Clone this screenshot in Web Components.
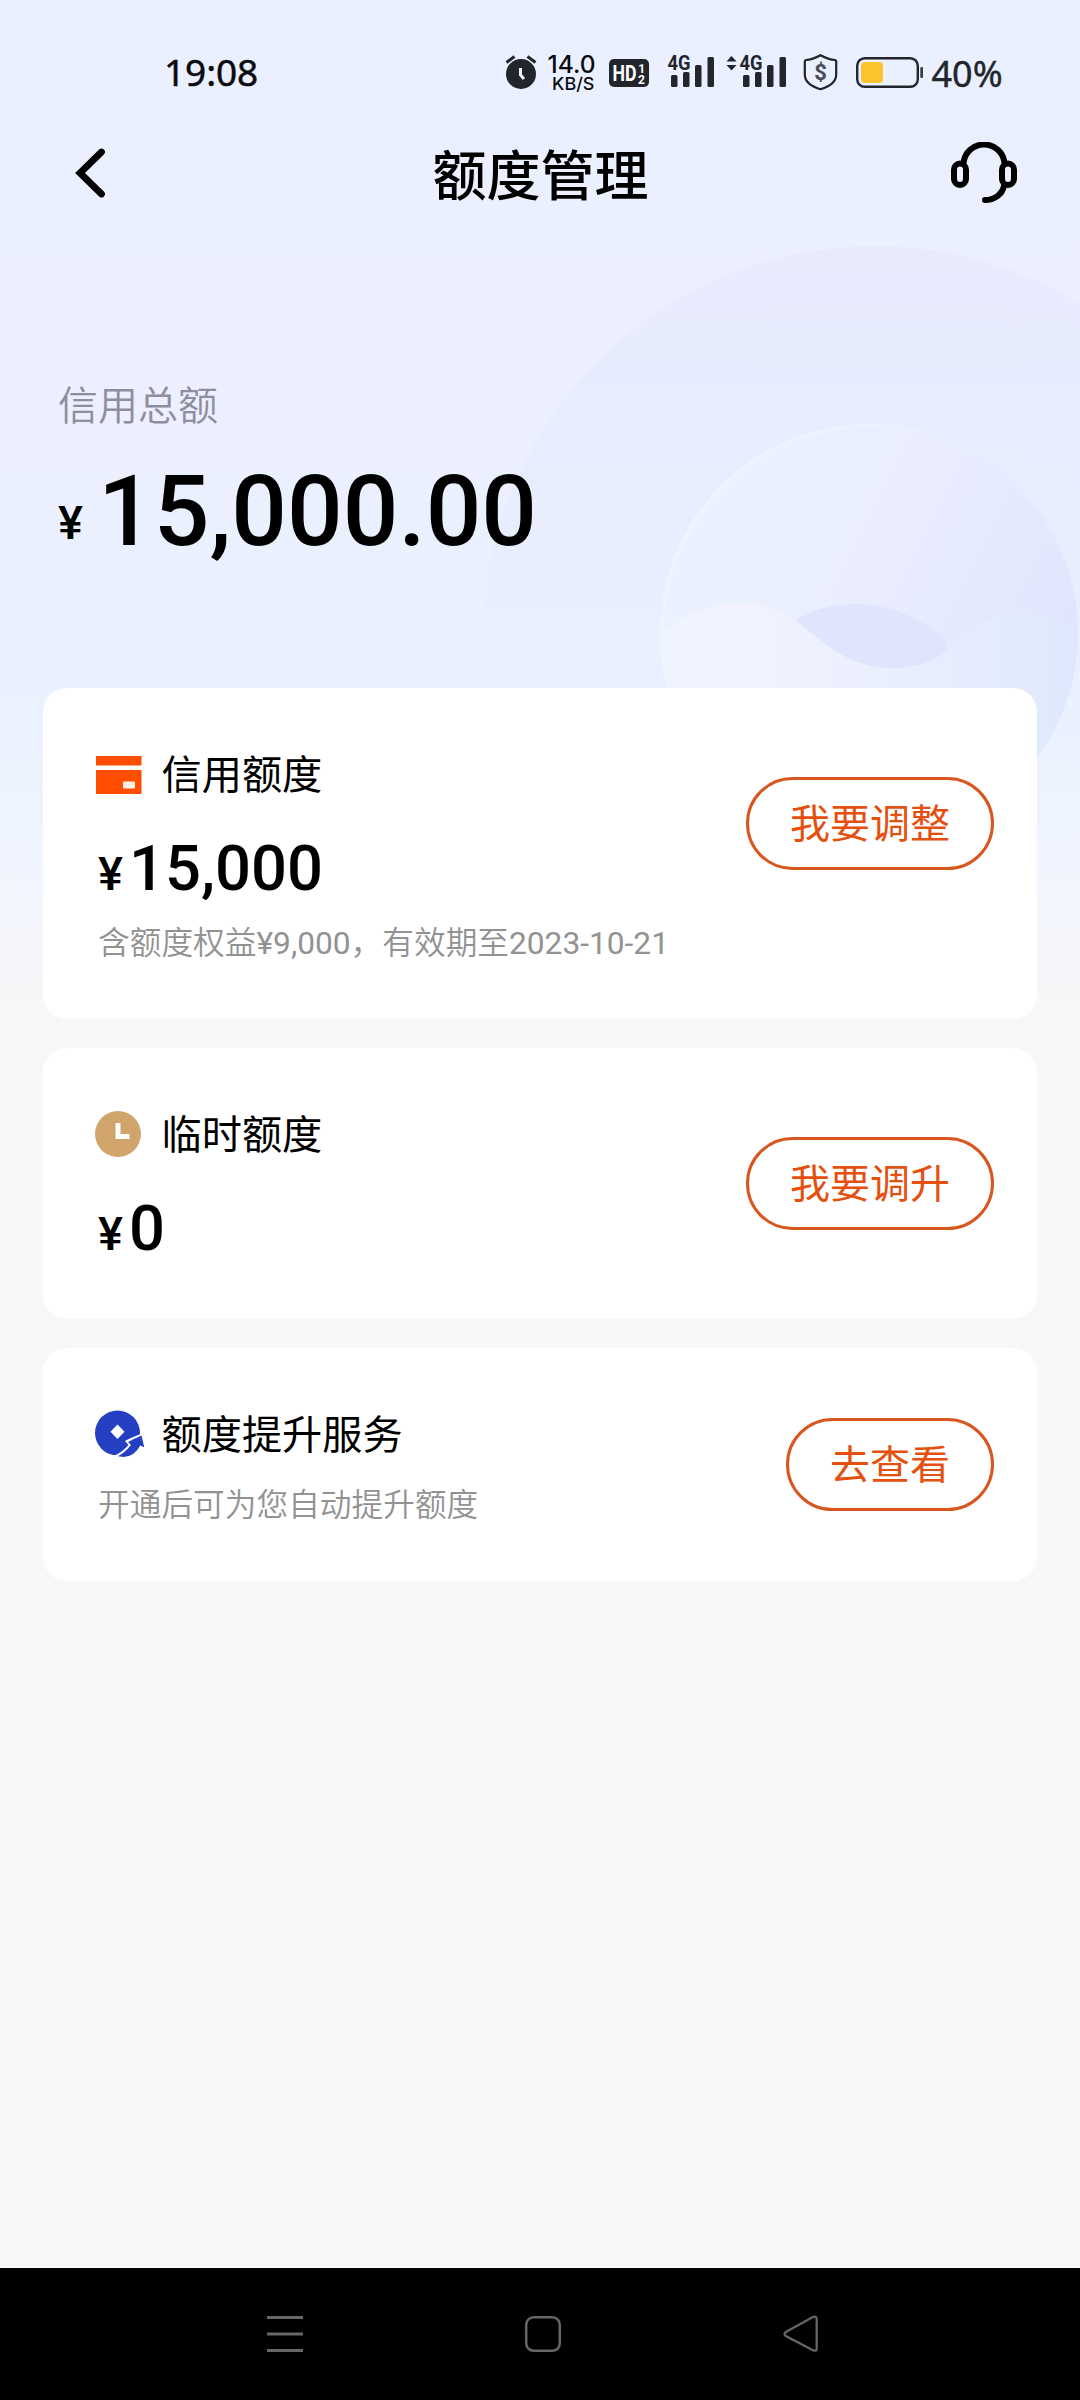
<!DOCTYPE html>
<html lang="zh-CN">
<head>
<meta charset="utf-8">
<title>额度管理</title>
<style>
html,body{margin:0;padding:0}
body{width:1080px;height:2400px;overflow:hidden;background:#f7f7f8;color:#000;font-family:Roboto,"Noto Sans CJK SC",sans-serif}
</style>
</head>
<body>
<limit-page></limit-page>
<script>
const define = (name, html) => {
  const t = document.createElement('template');
  t.innerHTML = html;
  customElements.define(name, class extends HTMLElement {
    constructor() {
      super();
      this.attachShadow({mode: 'open'}).appendChild(t.content.cloneNode(true));
    }
  });
};

define('status-bar', `
<style>
:host{display:flex;align-items:center;height:54px;padding-top:46px;color:#0a0b10;font-family:"Noto Sans",sans-serif}
.time{width:341px;padding-left:164px;font-size:37px;line-height:54px;letter-spacing:-.1px;box-sizing:border-box;margin-bottom:2px;-webkit-text-stroke:.5px #0a0b10}
svg{display:block;height:40px;flex:none;overflow:visible}
.pct{margin-left:7.500px;margin-top:1px;font-size:36px;line-height:54px;color:#22252c;-webkit-text-stroke:.4px #22252c}
</style>
<span class="time">19:08</span>
<svg style="width:32px;margin-left:164px" viewBox="505 53 32 40"><circle cx="521" cy="74" r="15" fill="#22252c"/><path d="M506.500 62.500L514.500 56.500M527.500 56.500L535.500 62.500" stroke="#22252c" stroke-width="3"/><path d="M520.500 68v7l3.500 4" fill="none" stroke="#ebf0ff" stroke-width="3"/></svg>
<svg style="width:46px;margin-left:12px" viewBox="549 53 46 40" font-family="Inter" font-weight="500" fill="#0a0b10"><text x="547.500" y="73.300" font-size="24.500" textLength="48" lengthAdjust="spacingAndGlyphs">14.0</text><text x="552" y="90.200" font-size="17.500" textLength="42.500" lengthAdjust="spacingAndGlyphs">KB/S</text></svg>
<svg style="width:40px;margin-left:14px" viewBox="609 53 40 40"><rect x="609" y="59" width="40" height="28" rx="5" fill="#22252c"/><g fill="#fff" font-family="Roboto" font-weight="700"><text x="612.500" y="81.300" font-size="22.500" textLength="24" lengthAdjust="spacingAndGlyphs">HD</text><text x="638.300" y="72.600" font-size="12">1</text><text x="638" y="83.800" font-size="12">2</text></g></svg>
<svg style="width:48px;margin-left:18px" viewBox="667 53 48 40" fill="#22252c"><text x="667.500" y="70" font-size="20" font-family="Roboto" font-weight="700" textLength="23" lengthAdjust="spacingAndGlyphs">4G</text><rect x="671" y="75" width="6.500" height="12" rx="1.500"/><rect x="683" y="72" width="6.500" height="15" rx="1.500"/><rect x="695" y="65" width="6.500" height="22" rx="1.500"/><rect x="707.500" y="57" width="6.500" height="30" rx="1.500"/></svg>
<svg style="width:61px;margin-left:11px" viewBox="726 53 61 40" fill="#22252c"><path d="M731.500 56l5 5.500h-10zM731.500 70.500l5-5.500h-10z"/><text x="739.500" y="70" font-size="20" font-family="Roboto" font-weight="700" textLength="23" lengthAdjust="spacingAndGlyphs">4G</text><rect x="743" y="75" width="6.500" height="12" rx="1.500"/><rect x="755" y="72" width="6.500" height="15" rx="1.500"/><rect x="767" y="65" width="6.500" height="22" rx="1.500"/><rect x="779.500" y="57" width="6.500" height="30" rx="1.500"/></svg>
<svg style="width:35px;margin-left:16px" viewBox="803 53 35 40"><path d="M820.500 55.200q8 4.300 14.500 4.800q1.200.2 1.200 1.500v13q0 10-15.700 14.700q-15.700-4.700-15.700-14.700v-13q0-1.300 1.200-1.500q6.500-.5 14.500-4.800z" fill="none" stroke="#22252c" stroke-width="2.200"/><text x="820.500" y="80" font-size="22" font-family="Roboto" font-weight="700" text-anchor="middle" fill="#4a4b51">$</text></svg>
<svg style="width:68px;margin-left:18px" viewBox="856 53 68 40"><rect x="857.200" y="58.200" width="60.600" height="28.600" rx="7.500" fill="none" stroke="#22252c" stroke-width="2.400"/><rect x="861" y="62" width="22" height="21" rx="4" fill="#fcc32f"/><rect x="920.300" y="67" width="2.700" height="11" rx="1" fill="#3a3c42"/></svg>
<span class="pct">40%</span>`);

define('nav-header', `
<style>
:host{display:flex;align-items:center;justify-content:space-between;height:148px;padding:0 61px 0 72px;box-sizing:border-box;width:1080px}
svg{display:block}
h1{margin:0 0 3px;font:500 54px/80px "Noto Sans CJK SC",sans-serif}
.side{width:70px;display:flex}
.left{width:60px}
</style>
<div class="side left"><svg width="36" height="54" viewBox="72 147 36 54"><path d="M101.500 152L80 173L101.500 194" fill="none" stroke="#000" stroke-width="6.800" stroke-linecap="round" stroke-linejoin="miter"/></svg></div>
<h1><slot></slot></h1>
<div class="side"><svg width="70" height="64" viewBox="949 142 70 64" fill="none" stroke="#000" stroke-width="6"><rect x="954" y="163.500" width="12" height="21.500" rx="6"/><rect x="1002" y="163.500" width="12" height="21.500" rx="6"/><path d="M963.500 163a20.600 20.600 0 0 1 41 0M1004 186c-2 9-10 14-19 14" stroke-linecap="round"/></svg></div>`);

define('hero-art', `
<style>:host{display:block;width:1080px;height:1000px}svg{display:block}</style>
<svg width="1080" height="1000" viewBox="0 0 1080 1000">
<defs>
<linearGradient id="sky" x1="0" y1="0" x2="0" y2="1"><stop offset="0" stop-color="#eaf0ff"/><stop offset=".22" stop-color="#ebf0ff"/><stop offset=".34" stop-color="#edefff"/><stop offset=".52" stop-color="#ebf0ff"/><stop offset=".7" stop-color="#eaf1ff"/><stop offset=".82" stop-color="#eef4ff"/><stop offset=".88" stop-color="#f2f5fe"/><stop offset=".96" stop-color="#f5f6fa"/><stop offset="1" stop-color="#f7f7f8"/></linearGradient>
<linearGradient id="big" x1="0" y1="0" x2="0" y2="1"><stop offset="0" stop-color="#e9ebfd"/><stop offset=".18" stop-color="#e7edfe"/><stop offset=".38" stop-color="#e8eefe"/><stop offset=".56" stop-color="#e8effe" stop-opacity=".4"/><stop offset=".7" stop-color="#eaf1ff" stop-opacity="0"/></linearGradient>
<linearGradient id="ball" x1=".1" y1=".2" x2=".95" y2=".62"><stop offset="0" stop-color="#ebf2ff"/><stop offset=".4" stop-color="#eaeefe"/><stop offset=".75" stop-color="#e5e9fd"/><stop offset="1" stop-color="#dfe5fe"/></linearGradient>
<linearGradient id="wave" x1="0" y1="0" x2="1" y2="0"><stop offset="0" stop-color="#f0f4ff"/><stop offset=".2" stop-color="#f2f3fe"/><stop offset=".55" stop-color="#eaeffe"/><stop offset=".85" stop-color="#e2ebfd"/><stop offset="1" stop-color="#e0e7fd"/></linearGradient>
<linearGradient id="rim" x1="0" y1=".3" x2=".8" y2=".3"><stop offset="0" stop-color="#eff5ff"/><stop offset="1" stop-color="#eff5ff" stop-opacity="0"/></linearGradient>
<clipPath id="c"><circle cx="869" cy="633" r="209"/></clipPath>
</defs>
<rect width="1080" height="1000" fill="url(#sky)"/>
<circle cx="875" cy="638" r="392" fill="url(#big)"/>
<g clip-path="url(#c)"><rect x="650" y="420" width="430" height="430" fill="url(#ball)"/>
<path d="M795 621C830 597 900 595 946 641V700H795z" fill="#e0e5fe"/>
<path d="M650 645C680 612 715 603 742 603C768 603 784 612 800 624C830 647 850 668 893 668C950 668 960 630 992 617C1022 607 1050 612 1080 630V850H650z" fill="url(#wave)"/></g>
<circle cx="869" cy="633" r="207" fill="none" stroke="url(#rim)" stroke-width="4"/>
</svg>`);

define('credit-total', `
<style>
:host{display:block;box-sizing:border-box;height:440px;padding:127px 58px 0}
.label{font:350 40px/56px "Noto Sans CJK SC",sans-serif;color:#8f8e9c}
.sum{display:flex;align-items:flex-end;margin-top:30.800px;font-weight:500}
.yen{font-size:47px;line-height:48px;margin-bottom:14.600px;width:40px}
.num{font-size:98px;line-height:100px}
</style>
<div class="label"><slot name="label"></slot></div>
<div class="sum"><span class="yen">¥</span><span class="num"><slot></slot></span></div>`);

define('pill-button', `
<style>
:host{display:block;flex:none;box-sizing:border-box;height:93px;border:3px solid #d9561f;border-radius:47px;padding:0 41px;font:400 40px/82px "Noto Sans CJK SC",sans-serif;color:#e5500f;white-space:nowrap}
</style><slot></slot>`);

define('money-text', `
<style>
:host{display:flex;align-items:baseline;margin:37px 0 0 4px;font-weight:500;line-height:64px}
.y{font-size:47px;width:31px}.n{font-size:63.300px}
</style><span class="y">¥</span><span class="n"><slot></slot></span>`);

define('limit-card', `
<style>
:host{display:flex;justify-content:space-between;align-items:flex-start;box-sizing:border-box;background:#fff;border-radius:24px;padding:55px 43px 0 51px}
.head{display:flex;align-items:center;height:56px;gap:17.500px}
.head h2{margin:1px 0 0;font:400 40.200px/56px "Noto Sans CJK SC",sans-serif}
::slotted(svg){display:block;width:50px;height:52px}
.note{margin:var(--note-gap,18px) 0 0 4px;font:350 31.700px/40px Roboto,"Noto Sans CJK SC",sans-serif;color:#929292;white-space:nowrap}
.action{margin-top:var(--action-top,34px)}
</style>
<div><div class="head"><slot name="icon"></slot><h2><slot name="title"></slot></h2></div><slot></slot><div class="note"><slot name="note"></slot></div></div>
<div class="action"><slot name="action"></slot></div>`);

define('system-nav', `
<style>
:host{display:flex;align-items:center;justify-content:space-between;box-sizing:border-box;height:132px;background:#000;padding:0 257px 0 263px}
svg{display:block}
</style>
<svg width="44" height="44" viewBox="263 2312 44 44" stroke="#666" stroke-width="3"><path d="M267 2317.500h36M267 2334h36M267 2350.500h36"/></svg>
<svg width="44" height="44" viewBox="521 2312 44 44"><rect x="526.200" y="2317.200" width="33.600" height="33.600" rx="7.500" fill="none" stroke="#666" stroke-width="2.500"/></svg>
<svg width="44" height="44" viewBox="779 2312 44 44"><path d="M785.800 2332L812.500 2317.200Q816.700 2315.500 816.700 2319V2348.500Q816.700 2352 812.500 2350L785.800 2336Q783.200 2334 785.800 2332z" fill="none" stroke="#666" stroke-width="2.300"/></svg>`);

define('limit-page', `
<style>
:host{display:flex;flex-direction:column;position:relative;width:1080px;height:2400px;background:#f7f7f8}
hero-art{position:absolute;left:0;top:0;z-index:0}
status-bar,nav-header,credit-total,main{position:relative;z-index:1;flex:none}
main{display:flex;flex-direction:column;gap:29px;padding:0 43px;flex:1}
.a{height:331px}.b{height:271px}.c{height:233px;--note-gap:27px;--action-top:15px}
.d{font-weight:400}
system-nav{border-top:2px solid #fcfcfc;height:134px}
</style>
<hero-art></hero-art>
<status-bar></status-bar>
<nav-header>额度管理</nav-header>
<credit-total><span slot="label">信用总额</span>15,000.00</credit-total>
<main>
<limit-card class="a">
<svg slot="icon" viewBox="94 745 50 52"><path fill="#ff4e00" d="M96 756h45.500v9.500H96zM96 770h45.500v24H96z"/><rect x="123" y="781.500" width="12" height="7" rx="1" fill="#fff3e8"/></svg>
<span slot="title">信用额度</span><money-text>15,000</money-text><span slot="note">含额度权益<span class="d">¥9,000</span>，有效期至<span class="d">2023-10-21</span></span>
<pill-button slot="action">我要调整</pill-button>
</limit-card>
<limit-card class="b">
<svg slot="icon" viewBox="94 1105 50 52"><circle cx="118" cy="1134" r="23" fill="#d1a46c"/><path d="M118 1123v13.500h11.500" fill="none" stroke="#fff" stroke-width="5"/></svg>
<span slot="title">临时额度</span><money-text>0</money-text>
<pill-button slot="action">我要调升</pill-button>
</limit-card>
<limit-card class="c">
<svg slot="icon" viewBox="94 1405 50 52"><circle cx="117.500" cy="1433" r="22.500" fill="#253fc2"/><path d="M117.500 1424.500l7 7.200-7 7.200-7-7.200z" fill="#fff"/><path d="M114.500 1455.500Q122 1452.500 128.500 1445L125 1441Q131 1437.500 139.500 1434.500L142.500 1436V1460H114.500z" fill="#fff"/><path d="M118 1456.300Q125 1452.500 131 1445L128 1442Q134 1438.800 141.500 1435.500L144.300 1447.500L140.300 1445.500Q134.500 1456.500 123.500 1457z" fill="#253fc2"/></svg>
<span slot="title">额度提升服务</span><span slot="note">开通后可为您自动提升额度</span>
<pill-button slot="action">去查看</pill-button>
</limit-card>
</main>
<system-nav></system-nav>`);
</script>
</body>
</html>
